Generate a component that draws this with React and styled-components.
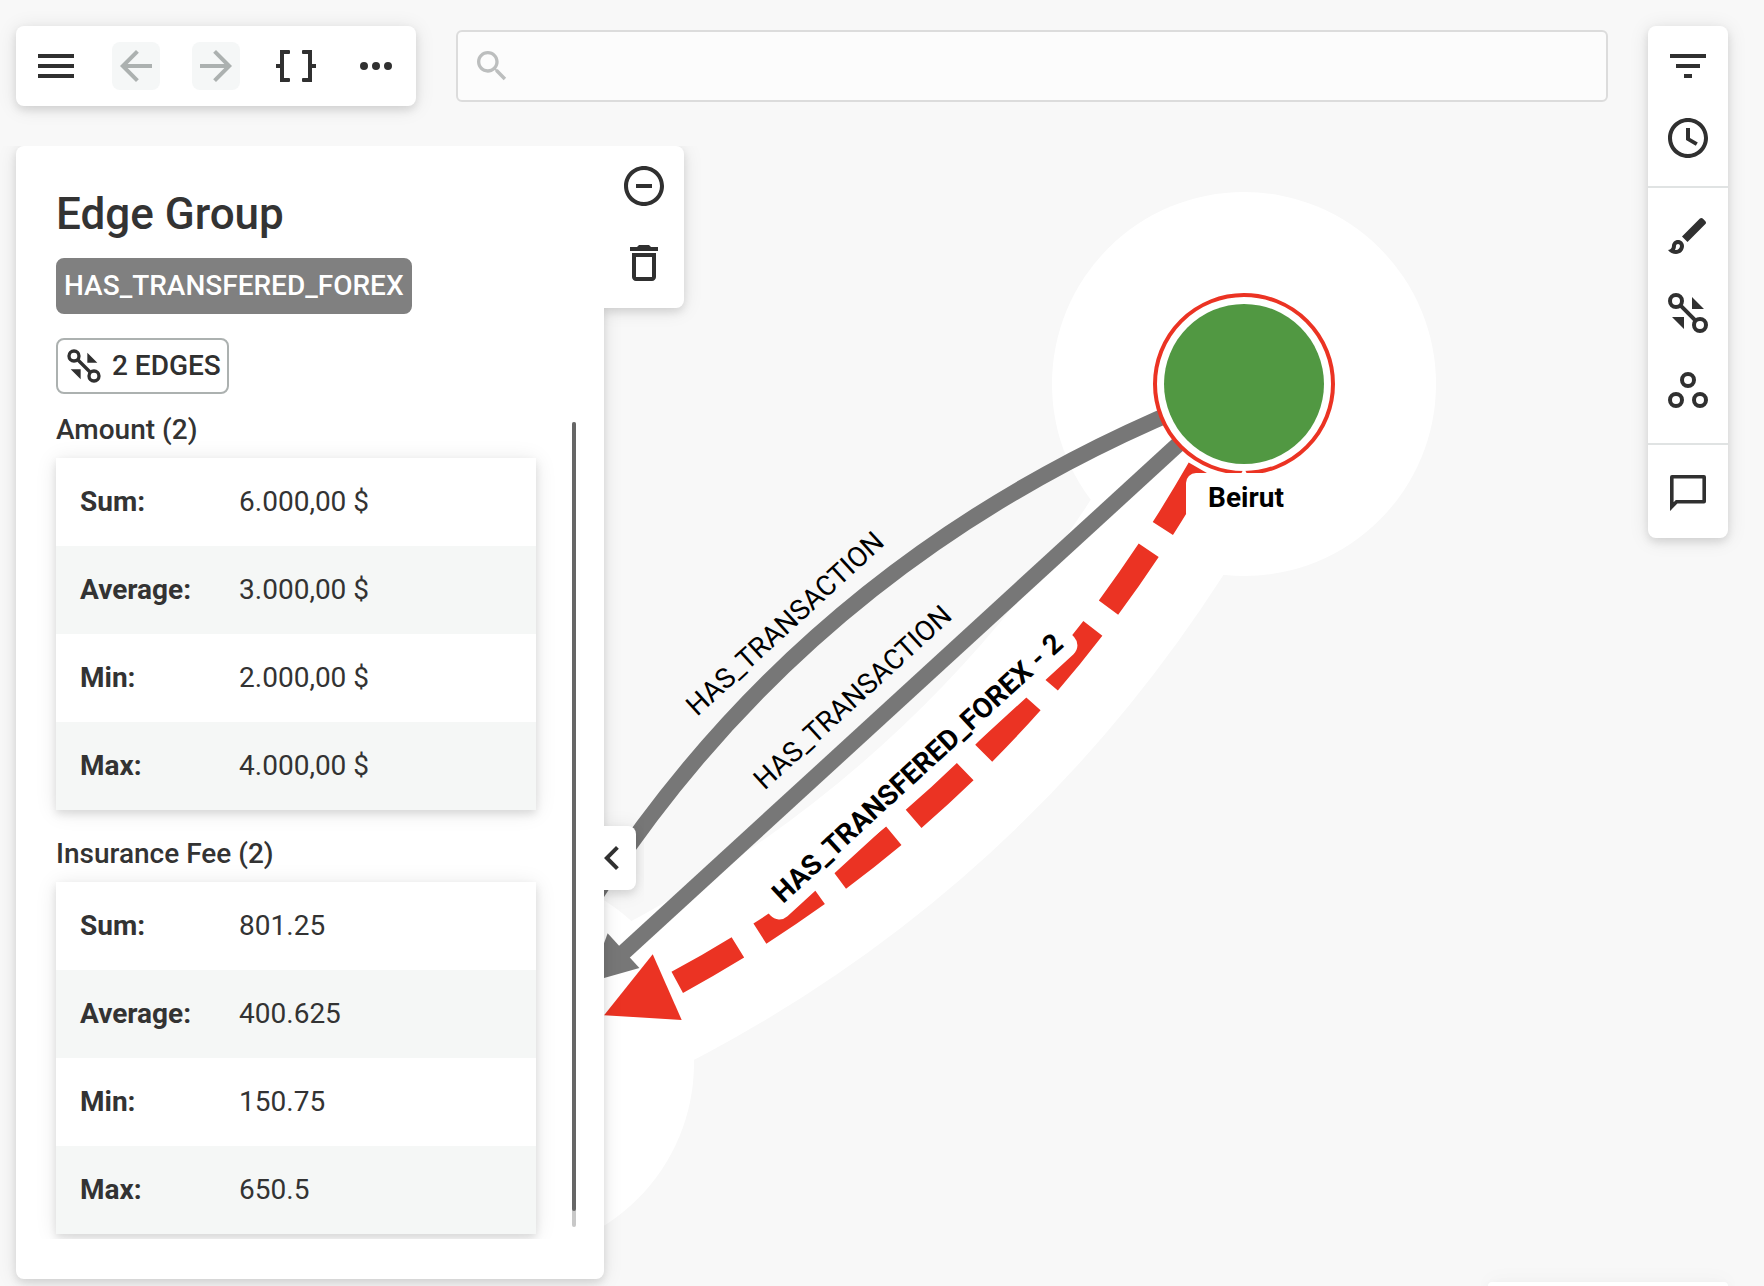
import React from 'react'
import styled, { createGlobalStyle, css } from 'styled-components'


const GlobalStyle = createGlobalStyle`
*{
  box-sizing:border-box;
}
body{
  margin:0;
  background-color:#f8f8f8;
  color:#333333;
  font-family:Roboto, "Liberation Sans", sans-serif;
  font-size:28px;
  line-height:32px;
}
`

const card = css`
background-color:#ffffff;
box-shadow:0 4px 8px rgba(0,0,0,0.1), 0 2px 20px rgba(0,0,0,0.1);
`

const Page = styled.div`
position:relative;
display:flex;
align-items:flex-start;
gap:40px;
min-height:100vh;
padding:26px 36px 7px 16px;
overflow:hidden;
`

const Canvas = styled.svg`
position:absolute;
top:0;
left:0;
width:100%;
height:100%;
`

const Main = styled.main`
position:relative;
flex:1;
min-width:0;
display:flex;
flex-direction:column;
gap:40px;
`

const TopRow = styled.div`
display:flex;
align-items:center;
gap:40px;
`

const Toolbar = styled.nav`
${card}
display:flex;
gap:32px;
padding:16px;
border-radius:8px;
`

const IconButton = styled.button`
display:flex;
align-items:center;
justify-content:center;
width:48px;
height:48px;
padding:0;
border:none;
border-radius:8px;
background-color:transparent;
color:#303030;
cursor:pointer;

&:disabled{
  background-color:#f5f7f7;
  color:#acb1b0;
  cursor:default;
}
`

const Icon = styled.svg`
display:block;
flex:none;
width:${(props) => props.$size || 48}px;
height:${(props) => props.$size || 48}px;
fill:currentColor;
`

const Search = styled.label`
flex:1;
display:flex;
align-items:center;
gap:8px;
height:72px;
padding:0 14px;
border:2px solid #dcdcdc;
border-radius:6px;
background-color:#fcfcfc;
color:#bcbebe;
`

const SearchInput = styled.input`
flex:1;
min-width:0;
height:48px;
border:none;
outline:none;
background:transparent;
color:#333333;
font:inherit;
`

const Body = styled.div`
display:flex;
align-items:flex-start;
`

const Panel = styled.section`
${card}
position:relative;
width:588px;
padding:40px 28px 40px 40px;
border-radius:8px 0 8px 8px;
clip-path:inset(0 -40px -40px -40px);
`

const Title = styled.h1`
margin:0 0 16px;
font-size:44px;
line-height:56px;
font-weight:500;
`

const Badge = styled.div`
display:flex;
align-items:center;
gap:8px;
width:fit-content;
height:56px;
margin-bottom:${(props) => (props.$outlined ? 20 : 24)}px;
padding:0 6px;
border:2px solid ${(props) => (props.$outlined ? '#acb1b0' : '#808080')};
border-radius:8px;
background-color:${(props) => (props.$outlined ? '#ffffff' : '#808080')};
color:${(props) => (props.$outlined ? '#303030' : '#ffffff')};
font-weight:500;
`

const ScrollRow = styled.div`
display:flex;
justify-content:space-between;
`

const Scroller = styled.div`
flex:none;
display:flex;
flex-direction:column;
gap:28px;
width:480px;
padding-bottom:5px;
clip-path:inset(0 -20px 0 -20px);
`

const Track = styled.div`
width:4px;
margin:8px 0 12px;
border-radius:2px;
background-color:#c8c8c8;
`

const Thumb = styled.div`
height:${(props) => props.$ratio}%;
border-radius:2px;
background-color:#666666;
`

const Stats = styled.table`
width:100%;
border-collapse:collapse;

caption{
  padding-bottom:12px;
  text-align:left;
  font-weight:500;
}

tbody{
  ${card}
}

tr:nth-child(even){
  background-color:#f5f7f6;
}

th, td{
  height:88px;
  padding:0 24px;
  text-align:left;
}

th{
  width:159px;
  font-weight:700;
}
`

const Actions = styled.div`
${card}
position:relative;
display:flex;
flex-direction:column;
gap:29px;
padding:16px 16px 21px;
border-radius:0 8px 8px 0;
clip-path:inset(0 -40px -40px 0);
`

const Collapse = styled.button`
${card}
position:absolute;
top:60%;
left:100%;
display:flex;
align-items:center;
width:32px;
height:64px;
padding:0;
border:none;
border-radius:0 8px 8px 0;
color:#303030;
clip-path:inset(-40px -40px -40px 0);
cursor:pointer;

svg{
  width:16px;
  height:24px;
  fill:currentColor;
}
`

const Rail = styled.aside`
${card}
position:relative;
flex:none;
border-radius:8px;
`

const RailGroup = styled.div`
display:flex;
flex-direction:column;
gap:${(props) => props.$gap || 0}px;
padding:${(props) => props.$pad};

& + &{
  border-top:2px solid #e0e3e3;
}
`

const BottomCard = styled.div`
${card}
position:absolute;
right:36px;
bottom:0;
width:240px;
height:4px;
border-radius:8px 8px 0 0;
`

const EdgeLabel = styled.text`
fill:#000000;
font-size:28px;
font-weight:${(props) => (props.$bold ? 700 : 400)};
text-anchor:middle;
`


const paths = {
  menu: 'M3 18h18v-2H3v2zm0-5h18v-2H3v2zm0-7v2h18V6H3z',
  back: 'M20 11H7.83l5.59-5.59L12 4l-8 8 8 8 1.41-1.41L7.83 13H20v-2z',
  forward: 'M12 4l-1.41 1.41L16.17 11H4v2h12.17l-5.58 5.59L12 20l8-8z',
  braces: 'M8.5 4H4v7H2v2h2v7h4.5a.5.5 0 0 0 .5-.5v-1a.5.5 0 0 0-.5-.5H6V6h2.5a.5.5 0 0 0 .5-.5v-1a.5.5 0 0 0-.5-.5zm7 0H20v7h2v2h-2v7h-4.5a.5.5 0 0 1-.5-.5v-1a.5.5 0 0 1 .5-.5H18V6h-2.5a.5.5 0 0 1-.5-.5v-1a.5.5 0 0 1 .5-.5z',
  more: 'M6 10a2 2 0 1 0 0 4 2 2 0 0 0 0-4zm12 0a2 2 0 1 0 0 4 2 2 0 0 0 0-4zm-6 0a2 2 0 1 0 0 4 2 2 0 0 0 0-4z',
  search: 'M15.5 14h-.79l-.28-.27C15.41 12.59 16 11.11 16 9.5 16 5.91 13.09 3 9.5 3S3 5.91 3 9.5 5.91 16 9.5 16c1.61 0 3.09-.59 4.23-1.57l.27.28v.79l5 4.99L20.49 19l-4.99-5zm-6 0C7.01 14 5 11.99 5 9.5S7.01 5 9.5 5 14 7.01 14 9.5 11.99 14 9.5 14z',
  minus: 'M8 11v2h8v-2H8zm4-9C6.48 2 2 6.48 2 12s4.48 10 10 10 10-4.48 10-10S17.52 2 12 2zm0 18c-4.41 0-8-3.59-8-8s3.59-8 8-8 8 3.59 8 8-3.59 8-8 8z',
  trash: 'M6 19c0 1.1.9 2 2 2h8c1.1 0 2-.9 2-2V7H6v12zM8 9h8v10H8V9zm7.5-5l-1-1h-5l-1 1H5v2h14V4z',
  filter: 'M10 18h4v-2h-4v2zM3 6v2h18V6H3zm3 7h12v-2H6v2z',
  clock: 'M11.99 2C6.47 2 2 6.48 2 12s4.47 10 9.99 10C17.52 22 22 17.52 22 12S17.52 2 11.99 2zM12 20c-4.42 0-8-3.58-8-8s3.58-8 8-8 8 3.58 8 8-3.58 8-8 8zm1-13h-2v6l4.9 2.9 1-1.6-3.9-2.3V7z',
  brush: 'M7 16c.55 0 1 .45 1 1 0 1.1-.9 2-2 2-.17 0-.33-.02-.5-.05.31-.55.5-1.21.5-1.95 0-.55.45-1 1-1M18.67 3c-.26 0-.51.1-.71.29L9 12.25 11.75 15l8.96-8.96c.39-.39.39-1.02 0-1.41l-1.34-1.34c-.2-.2-.45-.29-.7-.29zM7 14c-1.66 0-3 1.34-3 3 0 1.31-1.16 2-2 2 .92 1.22 2.49 2 4 2 2.21 0 4-1.79 4-4 0-1.66-1.34-3-3-3z',
  chat: 'M4 3h16a1 1 0 0 1 1 1v12.3a1 1 0 0 1-1 1H6.7L3 21V4a1 1 0 0 1 1-1zm.8 1.8v11.8l1.1-1.1h13.3V4.8z',
}

const Glyph = ({ name, size }) => (
  <Icon viewBox="0 0 24 24" $size={size} aria-hidden="true">
    <path d={paths[name]} fillRule="evenodd" />
  </Icon>
)

const EdgesIcon = ({ size }) => (
  <Icon viewBox="0 0 24 24" $size={size} aria-hidden="true">
    <path d="M14 4v6h6zM4 14h6v6z" />
    <g fill="none" stroke="currentColor" strokeWidth="2">
      <circle cx="6" cy="6" r="3" />
      <circle cx="18" cy="18" r="3" />
      <path d="M8.1 8.1l7.8 7.8" />
    </g>
  </Icon>
)

const NodesIcon = () => (
  <Icon viewBox="0 0 24 24" aria-hidden="true">
    <g fill="none" stroke="currentColor" strokeWidth="2">
      <circle cx="12" cy="7" r="3" />
      <circle cx="6" cy="17" r="3" />
      <circle cx="18" cy="17" r="3" />
    </g>
  </Icon>
)

const StatsTable = ({ title, rows }) => (
  <Stats>
    <caption>{title}</caption>
    <tbody>
      {rows.map(([label, value]) => (
        <tr key={label}>
          <th scope="row">{label}</th>
          <td>{value}</td>
        </tr>
      ))}
    </tbody>
  </Stats>
)

const amount = [
  ['Sum:', '6.000,00 $'],
  ['Average:', '3.000,00 $'],
  ['Min:', '2.000,00 $'],
  ['Max:', '4.000,00 $'],
]

const insuranceFee = [
  ['Sum:', '801.25'],
  ['Average:', '400.625'],
  ['Min:', '150.75'],
  ['Max:', '650.5'],
]

// The edges live in a frame that runs along the line between the two nodes
const edgeFrame = 'translate(873 724) rotate(-42.5)'

const Graph = () => (
  <Canvas>
    <g fill="#ffffff">
      <circle cx="1244" cy="384" r="192" />
      <circle cx="502" cy="1063" r="192" />
    </g>
    <g transform={edgeFrame}>
      <path d="M503 0Q0 196 -503 0" fill="none" stroke="#ffffff" strokeWidth="152" />
      <path d="M503 0Q0 -206 -503 0" fill="none" stroke="#777777" strokeWidth="16" />
      <path d="M503 0H-350" fill="none" stroke="#777777" strokeWidth="16" />
      <path d="M-383 -1L-337 -25V22z" fill="#777777" />
      <path d="M413 32Q46 149 -320 58" fill="none" stroke="#eb3323" strokeWidth="24" strokeDasharray="70 26" />
      <path d="M-395 33L-318 21L-341 89z" fill="#eb3323" />
      <rect x="-205" y="44" width="412" height="40" rx="12" fill="#ffffff" />
      <EdgeLabel x="3" y="-124">HAS_TRANSACTION</EdgeLabel>
      <EdgeLabel x="3" y="-24">HAS_TRANSACTION</EdgeLabel>
      <EdgeLabel x="3" y="72" $bold>HAS_TRANSFERED_FOREX - 2</EdgeLabel>
    </g>
    <circle cx="1244" cy="384" r="89" fill="#ffffff" stroke="#eb3323" strokeWidth="4" />
    <circle cx="1244" cy="384" r="80" fill="#519842" />
    <path d="M1241 474l2-4h2l2 4z" fill="#ffffff" />
    <rect x="1186" y="473" width="120" height="50" rx="10" fill="#ffffff" />
    <EdgeLabel x="1246" y="507" $bold>Beirut</EdgeLabel>
  </Canvas>
)

const App = () => {
  return (
    <Page>
      <GlobalStyle />
      <Graph />
      <Main>
        <TopRow>
          <Toolbar>
            <IconButton aria-label="Menu"><Glyph name="menu" /></IconButton>
            <IconButton aria-label="Undo" disabled><Glyph name="back" /></IconButton>
            <IconButton aria-label="Redo" disabled><Glyph name="forward" /></IconButton>
            <IconButton aria-label="Query"><Glyph name="braces" /></IconButton>
            <IconButton aria-label="More"><Glyph name="more" /></IconButton>
          </Toolbar>
          <Search>
            <Glyph name="search" size={40} />
            <SearchInput type="text" aria-label="Search" />
          </Search>
        </TopRow>
        <Body>
          <Panel>
            <Title>Edge Group</Title>
            <Badge>HAS_TRANSFERED_FOREX</Badge>
            <Badge $outlined>
              <EdgesIcon size={40} />
              2 EDGES
            </Badge>
            <ScrollRow>
              <Scroller>
                <StatsTable title="Amount (2)" rows={amount} />
                <StatsTable title="Insurance Fee (2)" rows={insuranceFee} />
              </Scroller>
              <Track>
                <Thumb $ratio={98} />
              </Track>
            </ScrollRow>
            <Collapse aria-label="Collapse panel">
              <svg viewBox="8 6 8 12" aria-hidden="true">
                <path d="M15.41 7.41L14 6l-6 6 6 6 1.41-1.41L10.83 12z" />
              </svg>
            </Collapse>
          </Panel>
          <Actions>
            <IconButton aria-label="Hide"><Glyph name="minus" /></IconButton>
            <IconButton aria-label="Delete"><Glyph name="trash" /></IconButton>
          </Actions>
        </Body>
      </Main>
      <Rail>
        <RailGroup $gap={24} $pad="16px 16px 24px">
          <IconButton aria-label="Filter"><Glyph name="filter" /></IconButton>
          <IconButton aria-label="Timeline"><Glyph name="clock" /></IconButton>
        </RailGroup>
        <RailGroup $gap={29} $pad="24px 16px 29px">
          <IconButton aria-label="Styles"><Glyph name="brush" /></IconButton>
          <IconButton aria-label="Edge grouping"><EdgesIcon /></IconButton>
          <IconButton aria-label="Node grouping"><NodesIcon /></IconButton>
        </RailGroup>
        <RailGroup $pad="24px 16px 21px">
          <IconButton aria-label="Comments"><Glyph name="chat" /></IconButton>
        </RailGroup>
      </Rail>
      <BottomCard />
    </Page>
  )
}

export default App
